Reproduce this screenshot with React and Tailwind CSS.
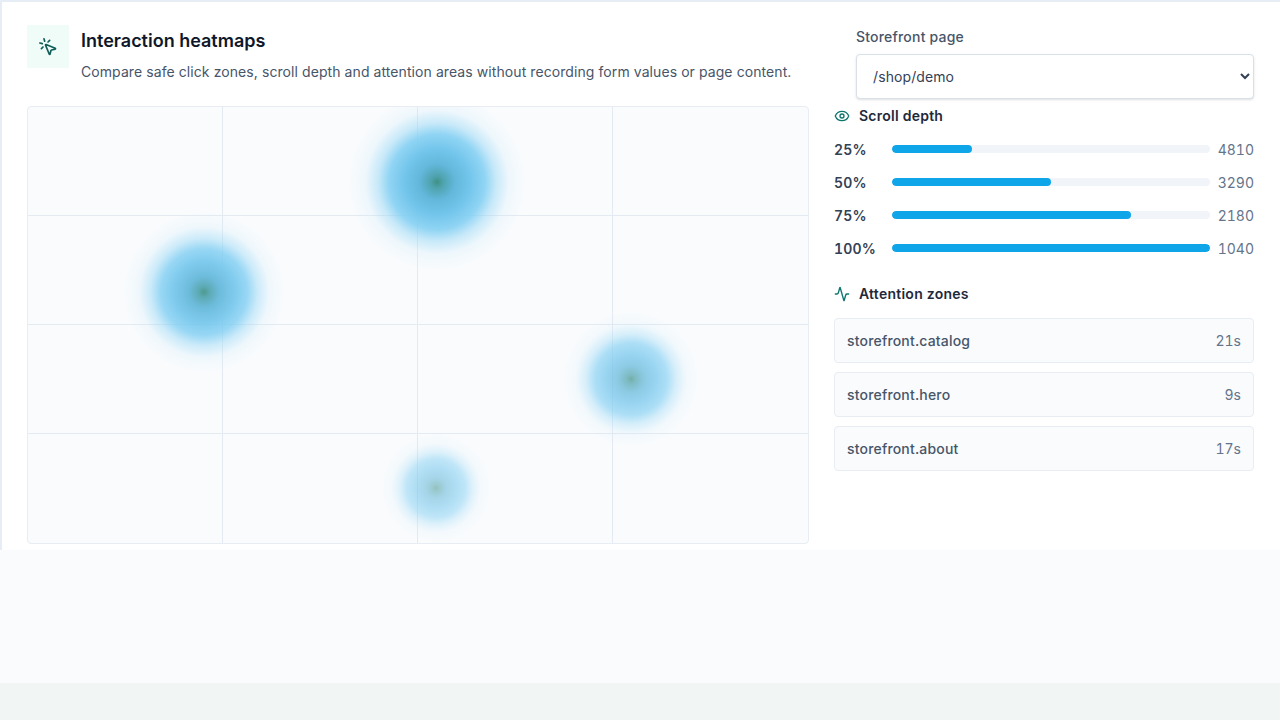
import { Activity, Eye, MousePointerClick } from 'lucide-react';
import React from 'react';

const blobs = [
  { x: 437, y: 182, size: 176, opacity: 1 },
  { x: 204, y: 292, size: 160, opacity: 0.92 },
  { x: 631, y: 379, size: 134, opacity: 0.72 },
  { x: 436, y: 488, size: 108, opacity: 0.55 },
];

const depths = [
  { label: '25%', width: 25, count: 4810 },
  { label: '50%', width: 50, count: 3290 },
  { label: '75%', width: 75, count: 2180 },
  { label: '100%', width: 100, count: 1040 },
];

const zones = [
  { name: 'storefront.catalog', time: '21s' },
  { name: 'storefront.hero', time: '9s' },
  { name: 'storefront.about', time: '17s' },
];

const Heatmap = () => (
  <div className="relative h-[438px] w-[782px] shrink-0 overflow-hidden rounded border border-[#e8edf3] bg-[#f9fbfd]">
    <div className="grid h-full grid-cols-4 grid-rows-4">
      {Array.from({ length: 16 }).map((_, i) => (
        <div
          key={i}
          className={`border-[#e4eaf1] ${i % 4 !== 3 ? 'border-r' : ''} ${i < 12 ? 'border-b' : ''}`}
        />
      ))}
    </div>
    {blobs.map((b) => (
      <div
        key={b.x + '-' + b.y}
        className="absolute rounded-full bg-[radial-gradient(circle_closest-side,#3f9184_0%,#4fa3ae_7%,#62b7da_20%,#74c6ec_38%,rgba(125,205,242,0.85)_54%,rgba(150,215,245,0.5)_67%,rgba(190,230,248,0.18)_82%,rgba(210,238,250,0)_100%)]"
        style={{
          left: b.x - 28 - b.size / 2,
          top: b.y - 107 - b.size / 2,
          width: b.size,
          height: b.size,
          opacity: b.opacity,
        }}
      />
    ))}
  </div>
);

export default function App() {
  return (
    <div className="flex h-[720px] w-[1280px] flex-col overflow-hidden bg-[#f9fbfc] font-['Inter',sans-serif]">
      <div className="h-[550px] shrink-0 border-t-2 border-l-2 border-[#e6edf5] bg-white pl-[25px] pr-[26px] pt-[23px]">
        <div className="flex h-[81px] justify-between">
          <div className="flex gap-3">
            <div className="flex h-[43px] w-[42px] items-center justify-center bg-[#effcf8]">
              <MousePointerClick className="h-5 w-5 text-[#115e59]" strokeWidth={2} />
            </div>
            <div className="pt-[3px]">
              <h2 className="text-[18px] leading-[26px] font-semibold text-[#0f172a]">Interaction heatmaps</h2>
              <p className="mt-[8px] text-[14px] leading-[20px] tracking-[0.08px] text-[#475569]">
                Compare safe click zones, scroll depth and attention areas without recording form values or page content.
              </p>
            </div>
          </div>
          <div className="w-[398px] pt-[2px]">
            <label className="block text-[14px] leading-[20px] tracking-[0.2px] font-medium text-[#475569]">Storefront page</label>
            <select className="mt-[7px] h-[45px] w-full rounded border border-[#d9e0e8] bg-white pl-3 pr-1 text-[14px] tracking-[0.1px] text-[#334155] shadow-sm">
              <option>/shop/demo</option>
            </select>
          </div>
        </div>

        <div className="flex gap-[25px]">
          <Heatmap />
          <div className="min-w-0 flex-1">
            <div className="flex items-center gap-[9px] text-[14px] leading-5 tracking-[0.25px] font-semibold text-[#1e293b]">
              <Eye className="h-4 w-4 text-[#0f766e]" strokeWidth={2} />
              Scroll depth
            </div>
            <div className="mt-[13px] flex flex-col gap-[13px]">
              {depths.map((d) => (
                <div key={d.label} className="flex h-5 items-center text-[14px] tabular-nums">
                  <span className="w-[58px] font-semibold tracking-[0.2px] text-[#334155]">{d.label}</span>
                  <div className="h-2 w-[318px] overflow-hidden rounded-full bg-[#f1f5f9]">
                    <div className="h-full rounded-full bg-[#0ea5e9]" style={{ width: d.width + '%' }} />
                  </div>
                  <span className="flex-1 text-right text-[#64748b]">{d.count}</span>
                </div>
              ))}
            </div>
            <div className="mt-[26px] flex items-center gap-[9px] text-[14px] leading-5 tracking-[0.25px] font-semibold text-[#1e293b]">
              <Activity className="h-4 w-4 text-[#0f766e]" strokeWidth={2} />
              Attention zones
            </div>
            <div className="mt-[14px] flex flex-col gap-[9px]">
              {zones.map((z) => (
                <div
                  key={z.name}
                  className="flex h-[45px] items-center justify-between rounded border border-[#e8edf3] bg-[#f9fbfd] px-3 text-[14px]"
                >
                  <span className="tracking-[0.18px] font-medium text-[#475569]">{z.name}</span>
                  <span className="tabular-nums text-[#64748b]">{z.time}</span>
                </div>
              ))}
            </div>
          </div>
        </div>
      </div>
      <div className="h-[133px] shrink-0" />
      <div className="flex-1 bg-[#f1f5f4]" />
    </div>
  );
}
